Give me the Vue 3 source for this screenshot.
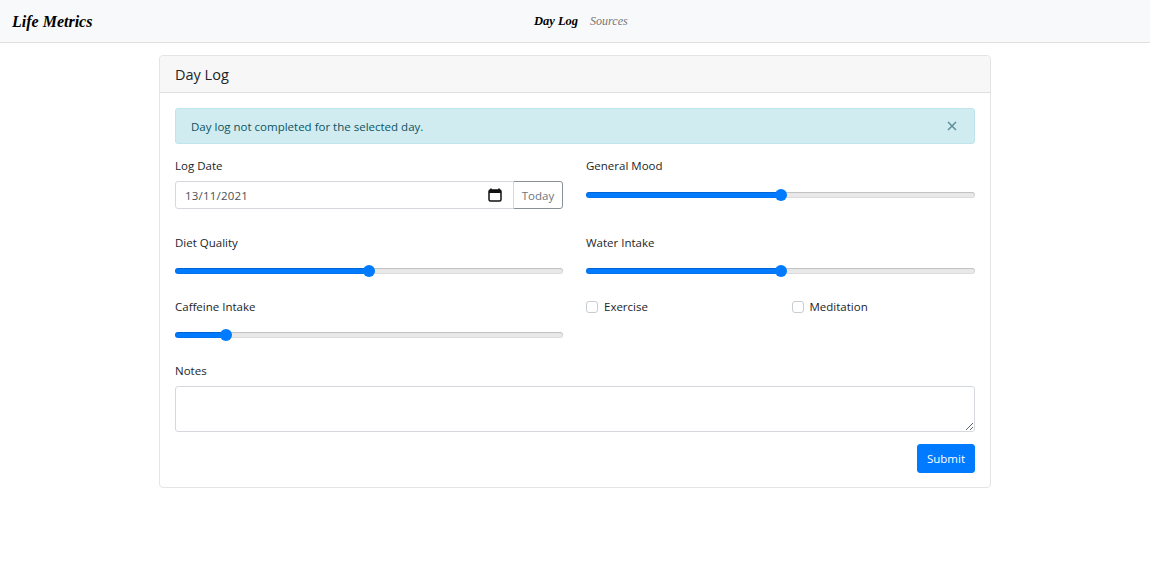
<script setup>
import { ref } from 'vue'

const logDate = ref('13/11/2021')
const notes = ref('')
const exercise = ref(false)
const meditation = ref(false)
const showAlert = ref(true)

const sliders = ref({ mood: 50, diet: 50, water: 50, caffeine: 12 })

function fill(value) {
  return { '--fill': value / 100 }
}
</script>

<template>
  <div class="page">
    <nav class="navbar">
      <a class="brand">Life Metrics</a>
      <div class="nav-links">
        <a class="nav-link active">Day Log</a>
        <a class="nav-link">Sources</a>
      </div>
    </nav>

    <main class="container">
      <section class="card">
        <header class="card-header">Day Log</header>
        <div class="card-body">
          <div v-if="showAlert" class="alert">
            <span>Day log not completed for the selected day.</span>
            <button class="alert-close" @click="showAlert = false">
              <svg width="10" height="10" viewBox="0 0 10 10">
                <path d="M1 1L9 9M9 1L1 9" stroke="currentColor" stroke-width="1.5" fill="none" />
              </svg>
            </button>
          </div>

          <div class="row row-date">
            <div class="field">
              <label>Log Date</label>
              <div class="input-group">
                <div class="date-wrap">
                  <input v-model="logDate" class="control date-input" type="text" />
                  <svg class="calendar" width="14" height="14" viewBox="0 0 14 14">
                    <path d="M3 .5V2.5M11 .5V2.5" stroke="#111" stroke-width="1.6" fill="none" />
                    <rect x="1" y="2" width="12" height="11" rx="1.5" stroke="#111" stroke-width="1.5" fill="none" />
                    <rect x="1" y="2" width="12" height="3" fill="#111" />
                  </svg>
                </div>
                <button class="today">Today</button>
              </div>
            </div>
            <div class="field">
              <label>General Mood</label>
              <input v-model="sliders.mood" class="range" type="range" :style="fill(sliders.mood)" />
            </div>
          </div>

          <div class="row">
            <div class="field">
              <label>Diet Quality</label>
              <input v-model="sliders.diet" class="range" type="range" :style="fill(sliders.diet)" />
            </div>
            <div class="field">
              <label>Water Intake</label>
              <input v-model="sliders.water" class="range" type="range" :style="fill(sliders.water)" />
            </div>
          </div>

          <div class="row">
            <div class="field">
              <label>Caffeine Intake</label>
              <input v-model="sliders.caffeine" class="range" type="range" :style="fill(sliders.caffeine)" />
            </div>
            <div class="checks">
              <label class="check"><input v-model="exercise" type="checkbox" />Exercise</label>
              <label class="check"><input v-model="meditation" type="checkbox" />Meditation</label>
            </div>
          </div>

          <div class="field field-notes">
            <label>Notes</label>
            <textarea v-model="notes" class="control notes"></textarea>
          </div>

          <div class="actions">
            <button class="submit">Submit</button>
          </div>
        </div>
      </section>
    </main>
  </div>
</template>

<style>
html, body {
  background: #fff;
}
</style>

<style scoped>
.page {
  font-family: "Open Sans", "Noto Sans", sans-serif;
  font-size: 11.5px;
  line-height: 21px;
  color: #212529;
}

.navbar {
  display: flex;
  align-items: center;
  box-sizing: border-box;
  height: 43px;
  padding: 0 12px;
  background: #f8f9fa;
  border-bottom: 1px solid #dfdfdf;
}

.brand {
  width: 81px;
  font-family: "Liberation Serif", serif;
  font-style: italic;
  font-weight: bold;
  font-size: 16px;
  white-space: nowrap;
  color: #000;
}

.nav-links {
  display: flex;
  gap: 12px;
  margin-left: 441px;
  font-family: "Liberation Serif", serif;
  font-style: italic;
  font-size: 12px;
  color: #777;
}

.nav-link.active {
  color: #000;
  font-weight: bold;
  font-size: 12.5px;
}

.container {
  width: 832px;
  margin: 12px 0 0 159px;
}

.card {
  box-sizing: border-box;
  border: 1px solid #e4e4e4;
  border-radius: 4px;
  background: #fff;
}

.card-header {
  box-sizing: border-box;
  height: 37px;
  padding: 0 15px;
  font-size: 14.5px;
  line-height: 37px;
  font-weight: 500;
  color: #212529;
  background: #f7f7f7;
  border-bottom: 1px solid #dfdfdf;
  border-radius: 4px 4px 0 0;
}

.card-body {
  padding: 15px 15px 14px;
}

.alert {
  box-sizing: border-box;
  display: flex;
  align-items: center;
  justify-content: space-between;
  height: 36px;
  padding: 0 17px 0 15px;
  margin-bottom: 12px;
  color: #0c5460;
  background: #d1ecf1;
  border: 1px solid #bee5eb;
  border-radius: 3px;
}

.alert-close {
  display: flex;
  padding: 0;
  border: none;
  background: none;
  color: #5d8d96;
}

.row {
  display: grid;
  grid-template-columns: 388px 389px;
  column-gap: 23px;
  margin-bottom: 11px;
}

.row-date {
  margin-bottom: 23px;
}

.field {
  display: flex;
  flex-direction: column;
}

.field label {
  margin-bottom: 4px;
}

.field-notes label {
  margin-bottom: 5px;
}

.row-date .field label {
  line-height: 19px;
  margin-bottom: 6px;
}

.input-group {
  display: flex;
}

.date-wrap {
  flex: 1;
  position: relative;
}

.control {
  display: block;
  width: 100%;
  box-sizing: border-box;
  border: 1px solid #d5d9dd;
  border-radius: 3px;
  font: inherit;
  color: #495057;
  outline: none;
}

.date-input {
  height: 28px;
  padding: 0 9px;
  border-radius: 3px 0 0 3px;
  letter-spacing: 0.2px;
}

.calendar {
  position: absolute;
  right: 12px;
  top: 7px;
}

.today {
  width: 50px;
  height: 28px;
  margin-left: -1px;
  padding: 0;
  font: inherit;
  color: #6c757d;
  background: #fff;
  border: 1px solid #8a9198;
  border-radius: 0 3px 3px 0;
}

.range {
  -webkit-appearance: none;
  appearance: none;
  display: block;
  width: 100%;
  height: 28px;
  margin: 0;
  background: transparent;
}

.range::-webkit-slider-runnable-track {
  height: 6px;
  border-radius: 3px;
  background: linear-gradient(
    to right,
    #007bff calc(6px + (100% - 12px) * var(--fill)),
    #e9e9e9 calc(6px + (100% - 12px) * var(--fill))
  );
  box-shadow: inset 0 1px 1px rgba(0, 0, 0, 0.12), inset 0 0 0 1px rgba(0, 0, 0, 0.06);
}

.range::-webkit-slider-thumb {
  -webkit-appearance: none;
  width: 12px;
  height: 12px;
  margin-top: -3px;
  border-radius: 50%;
  background: #007bff;
  border: none;
}

.checks {
  display: grid;
  grid-template-columns: 205.5px 1fr;
  align-items: start;
}

.check {
  display: flex;
  align-items: center;
  gap: 6px;
}

.check input {
  -webkit-appearance: none;
  appearance: none;
  width: 12px;
  height: 12px;
  margin: 0;
  border: 1px solid #c8cdd2;
  border-radius: 3px;
  background: #fff;
}

.notes {
  height: 46px;
  padding: 4px 9px;
  resize: vertical;
}

.actions {
  display: flex;
  justify-content: flex-end;
  margin-top: 12px;
}

.submit {
  width: 58px;
  height: 29px;
  padding: 0;
  font: inherit;
  color: #fff;
  background: #007bff;
  border: 1px solid #007bff;
  border-radius: 3px;
}
</style>
